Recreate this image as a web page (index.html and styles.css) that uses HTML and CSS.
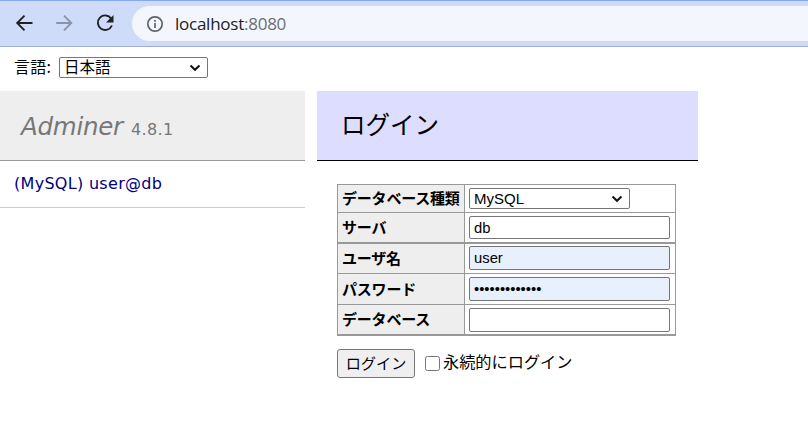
FILE: index.html
```html
<!DOCTYPE html>
<html lang="ja">
<head>
<meta charset="utf-8">
<title>ログイン - Adminer</title>
<link rel="stylesheet" href="styles.css">
</head>
<body>
<header class="toolbar">
  <svg class="nav" viewBox="0 0 120 24" fill="none" stroke="#202124" stroke-width="1.9">
    <path d="M25.5 12H10.500M17.500 4.700L10.200 12l7.300 7.300"/>
    <path stroke="#8b93a7" d="M49.200 12H64M57 4.700L64.300 12 57 19.300"/>
    <path d="M104.200 7.600A7.300 7.300 0 1 0 104.900 14.500"/>
    <path fill="#202124" stroke="none" d="M106.500 4v7.500H99z"/>
  </svg>
  <div class="address">
    <svg class="info" viewBox="0 0 18 18" fill="none" stroke="#5f6368" stroke-width="1.700"><circle cx="9" cy="9" r="7.200"/><path d="M9 8v5M9 5v1.800"/></svg>
    <span class="url">localhost<span class="port">:8080</span></span>
  </div>
</header>
<div class="language">
  <span class="language-label">言語:</span>
  <div class="select language-select"><span>日本語</span><svg class="chevron" viewBox="0 0 12 8"><path d="M1.500 1.500L6 5.800l4.500-4.300"/></svg></div>
</div>
<div class="columns">
  <nav class="menu">
    <h1><span class="brand">Adminer</span><span class="version">4.8.1</span></h1>
    <p class="logins"><a>(MySQL) user@db</a></p>
  </nav>
  <main class="content">
    <h2><span>ログイン</span></h2>
    <form>
      <div class="table">
        <div class="row r1"><div class="th"><span>データベース種類</span></div><div class="td"><div class="select driver"><span>MySQL</span><svg class="chevron" viewBox="0 0 12 8"><path d="M1.500 1.500L6 5.800l4.500-4.300"/></svg></div></div></div>
        <div class="row r2"><div class="th"><span>サーバ</span></div><div class="td"><input value="db"></div></div>
        <div class="row r3"><div class="th"><span>ユーザ名</span></div><div class="td"><input class="filled" value="user"></div></div>
        <div class="row r4"><div class="th"><span>パスワード</span></div><div class="td"><input class="filled" type="password" value="1234567890123"></div></div>
        <div class="row r5"><div class="th"><span>データベース</span></div><div class="td"><input></div></div>
      </div>
      <div class="actions">
        <button type="button"><span>ログイン</span></button>
        <label><input type="checkbox"><span>永続的にログイン</span></label>
      </div>
    </form>
  </main>
</div>
</body>
</html>
```
FILE: styles.css
```css
* { box-sizing: border-box; }
body { margin: 0; height: 447px; overflow: hidden; background: #fff; color: #000; font: 16px/20px "DejaVu Sans", "Noto Sans CJK JP", sans-serif; }
svg { display: block; flex: none; }
.toolbar { display: flex; height: 47px; padding-top: 5px; background: #cedbf9; border-top: 1px solid #85a8ee; border-bottom: 1px solid #a3accb; }
.nav { width: 120px; height: 24px; margin: 5px 0 0 7px; }
.address { flex: 1; display: flex; align-items: center; height: 35px; margin-left: 5px; padding-left: 14px; border-radius: 18px 0 0 18px; background: #f3f7fd; }
.info { width: 18px; height: 18px; margin-right: 11px; }
.url { font: 17px/24px "Open Sans", sans-serif; letter-spacing: -0.250px; color: #202124; white-space: nowrap; }
.port { color: #6a6e73; }
.language { display: flex; height: 44px; padding: 10px 0 0 14px; }
.language-label { width: 45px; line-height: 19px; letter-spacing: 0.300px; font-family: "Noto Sans CJK JP", sans-serif; }
.select { display: flex; align-items: center; justify-content: space-between; height: 21px; padding: 0 6px 0 4px; border: 1px solid #767676; border-radius: 2px; background: #fff; line-height: 19px; }
.language-select { width: 149px; font-family: "Noto Sans CJK JP", sans-serif; font-size: 15.500px; }
.language-select span { line-height: 17px; padding-bottom: 2px; }
.chevron { width: 12px; height: 8px; fill: none; stroke: #111; stroke-width: 2; }
.columns { display: flex; gap: 12px; }
.menu { width: 305px; }
h1, h2 { margin: 0; height: 70px; font-weight: normal; white-space: nowrap; }
h1 { padding: 18px 0 0 21px; background: #eee; border-bottom: 1px solid #999; color: #777; line-height: 30px; }
.brand { font-size: 24.500px; font-style: italic; letter-spacing: -0.250px; }
.version { margin-left: 8px; font-size: 16px; letter-spacing: 0.400px; }
.logins { height: 47px; margin: 0; padding: 13px 0 0 14px; border-bottom: 1px solid #ccc; }
.logins a { color: #000080; letter-spacing: 0.300px; }
.content { width: 381px; }
h2 { padding: 16px 0 0 24px; background: #ddf; border-bottom: 1px solid #000; font: 24.500px/34px "Noto Sans CJK JP", sans-serif; }
form { padding: 23px 0 0 20px; }
.table { width: 339px; border: 1px solid #999; border-bottom-width: 2px; }
.row { display: grid; grid-template-columns: 127px 1fr; border-bottom: 1px solid #999; }
.r1 { height: 28px; }
.r2 { height: 31px; border-bottom-width: 2px; }
.r3 { height: 30px; }
.r4 { height: 31px; }
.r5 { height: 29px; border-bottom: 0; }
.th { display: flex; align-items: center; padding: 0 0 2px 4px; background: #eee; border-right: 1px solid #999; font: bold 15px/20px "Noto Sans CJK JP", sans-serif; letter-spacing: -0.2px; white-space: nowrap; }
.r4 .th { padding-bottom: 0; }
.td { padding: 3px 0 0 4px; }
.r3 .td { padding-top: 2px; }
.driver { width: 161px; font: 15px/19px "Liberation Sans", sans-serif; }
.td input { display: block; width: 201px; height: 24px; margin: 0; padding: 0 4px; border: 1px solid #767676; border-radius: 2px; background: #fff; color: #000; font: 14.800px/20px "Liberation Sans", sans-serif; }
.r2 input { height: 23px; }
.td .filled { background: #e8f0fe; }
.actions { display: flex; margin-top: 13px; }
button { width: 78px; height: 29px; padding: 0 0 3px; border: 1px solid #767676; border-radius: 3px; background: #efefef; color: #000; font: 15.200px/20px "Noto Sans CJK JP", sans-serif; }
label { display: flex; height: 29px; margin-left: 10px; font: 16.200px/25px "Noto Sans CJK JP", sans-serif; white-space: nowrap; }
label input { width: 15px; height: 15px; margin: 7px 3px 0 0; }
```
